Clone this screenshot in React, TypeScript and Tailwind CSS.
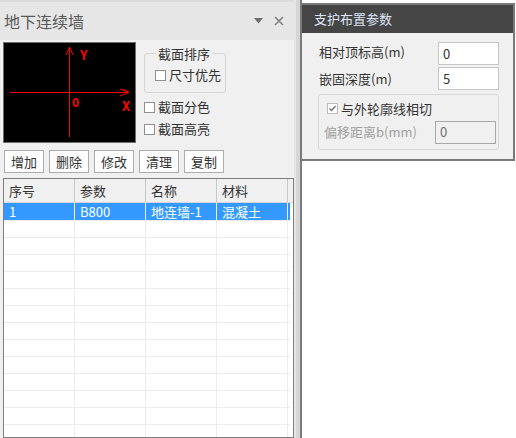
import { useState } from 'react'

const font = { fontFamily: '"Noto Sans CJK SC", "Noto Sans", sans-serif' }

const columns = ['序号', '参数', '名称', '材料']
const rows = [['1', 'B800', '地连墙-1', '混凝土']]

function CheckBox({ checked = false, disabled = false }: { checked?: boolean; disabled?: boolean }) {
  return (
    <span
      className={`flex h-[11px] w-[11px] items-center justify-center border bg-white ${
        disabled ? 'border-[#bcbcbc]' : 'border-[#8f8f8f]'
      }`}
    >
      {checked && (
        <svg width="9" height="9" viewBox="0 0 9 9">
          <path d="M1.5 4.5 L3.5 6.5 L7.5 2" fill="none" stroke="#6d6d6d" strokeWidth="1.3" />
        </svg>
      )}
    </span>
  )
}

function Preview() {
  return (
    <div className="h-[101px] w-[133px] shrink-0 border border-[#6e6e6e] bg-black">
      <svg width="131" height="99" viewBox="0 0 131 99">
        <g stroke="#ff0000" strokeWidth="1" fill="none">
          <line x1="65.5" y1="4" x2="65.5" y2="94" />
          <line x1="6" y1="49.5" x2="125" y2="49.5" />
          <path d="M62 12 L65.5 4 L69 12" />
          <path d="M116 46 L125 49.5 L116 53" />
          <path d="M119 46 L125 49.5" />
        </g>
        <text x="76" y="17" fill="#ff0000" fontSize="13" fontWeight="700" style={font}>Y</text>
        <text x="68" y="64" fill="#ff0000" fontSize="12" fontWeight="700" style={font}>0</text>
        <text x="118" y="68" fill="#ff0000" fontSize="13" fontWeight="700" style={font}>X</text>
      </svg>
    </div>
  )
}

function LeftPanel() {
  const [selected] = useState(0)
  const blank = Array.from({ length: 13 })

  return (
    <div className="flex h-[438px] w-[294px] shrink-0 flex-col bg-[#f0f0f0]">
      <div className="flex h-[40px] items-center justify-between border-t-2 border-[#dcdcdc] bg-[#e6e6e6] pl-[4px] pr-[10px]">
        <span className="text-[16px] text-[#595959]">地下连续墙</span>
        <div className="flex items-center gap-[11px] text-[#777]">
          <svg width="9" height="6" viewBox="0 0 9 6">
            <path d="M0 0 H9 L4.5 5.5 Z" fill="#707070" />
          </svg>
          <svg width="10" height="10" viewBox="0 0 10 10">
            <path d="M1 1 L9 9 M9 1 L1 9" stroke="#808080" strokeWidth="1.6" />
          </svg>
        </div>
      </div>

      <div className="flex gap-[8px] pl-[3px] pt-[2px]">
        <Preview />
        <div className="flex flex-col pt-[4px]">
          <fieldset className="h-[47px] w-[82px] rounded-[3px] border border-[#d5d5d5] pl-[10px]">
            <legend className="-mt-[3px] ml-[1px] px-[2px] text-[13px] leading-[15px] text-[#333]">截面排序</legend>
            <label className="mt-[6px] flex items-center gap-[3px] text-[13px] leading-[16px] text-[#333]">
              <CheckBox />
              尺寸优先
            </label>
          </fieldset>
          <label className="mt-[6px] flex items-center gap-[3px] text-[13px] leading-[16px] text-[#333]">
            <CheckBox />
            截面分色
          </label>
          <label className="mt-[6px] flex items-center gap-[3px] text-[13px] leading-[16px] text-[#333]">
            <CheckBox />
            截面高亮
          </label>
        </div>
      </div>

      <div className="mt-[7px] flex gap-[5px] pl-[4px]">
        {['增加', '删除', '修改', '清理', '复制'].map((b) => (
          <button
            key={b}
            className="h-[23px] w-[40px] border border-[#adadad] bg-[#fdfdfd] text-[13px] leading-none text-[#333]"
          >
            {b}
          </button>
        ))}
      </div>

      <div className="ml-[3px] mt-[5px] flex-1 overflow-hidden border border-[#7f7f7f] bg-white">
        <div className="flex h-[24px] border-b border-[#d6d6d6] bg-[#f0f0f0] text-[13px] text-[#333]">
          {columns.map((c) => (
            <div key={c} className="flex w-[71px] items-center border-r border-[#c8c8c8] pl-[5px]">
              {c}
            </div>
          ))}
        </div>
        {rows.map((r, i) => (
          <div
            key={i}
            className={`flex h-[17px] w-[286px] text-[13px] leading-[17px] ${
              i === selected ? 'bg-[#3399ff] text-white' : 'text-[#333]'
            }`}
          >
            {r.map((v, j) => (
              <div key={j} className="w-[71px] border-r border-[#f0f0f0] pl-[5px]">
                {v}
              </div>
            ))}
          </div>
        ))}
        {blank.map((_, i) => (
          <div key={i} className="flex h-[17px] w-[286px] border-t border-[#ececec]">
            {columns.map((c) => (
              <div key={c} className="w-[71px] border-r border-[#ececec]" />
            ))}
          </div>
        ))}
      </div>
    </div>
  )
}

function RightPanel() {
  return (
    <div className="mt-[3px] h-[158px] w-[213px] border-2 border-l-0 border-[#7a7a7a] bg-[#f0f0f0]">
      <div className="flex h-[28px] items-center bg-[#454545] pl-[12px] text-[13px] text-[#dce6f7]">支护布置参数</div>
      <div className="flex flex-col pl-[17px] pr-[14px] pt-[9px] text-[13px] text-[#333]">
        <div className="flex items-center justify-between">
          <span className="-mt-[4px]">相对顶标高(m)</span>
          <div className="flex h-[23px] w-[61px] items-center border border-[#c6c6c6] bg-white pl-[4px]">0</div>
        </div>
        <div className="mt-[2px] flex items-center justify-between">
          <span>嵌固深度(m)</span>
          <div className="flex h-[23px] w-[61px] items-center border border-[#c6c6c6] bg-white pl-[4px]">5</div>
        </div>
        <div className="-ml-[1px] mt-[4px] h-[56px] rounded-[3px] border border-[#d8d8d8] pl-[8px] pr-[2px] pt-[4px]">
          <label className="flex items-center gap-[3px]">
            <CheckBox checked disabled />
            <span>与外轮廓线相切</span>
          </label>
          <div className="mt-[2px] flex items-center justify-between">
            <span className="-ml-[3px] text-[#a0a0a0]">偏移距离b(mm)</span>
            <div className="flex h-[23px] w-[61px] items-center border border-[#a8a8a8] bg-[#f0f0f0] pl-[4px] text-[#6d6d6d]">
              0
            </div>
          </div>
        </div>
      </div>
    </div>
  )
}

export default function App() {
  return (
    <div className="flex h-[438px] w-[516px] overflow-hidden bg-white" style={font}>
      <LeftPanel />
      <div className="w-[8px] shrink-0 border-l-2 border-r-2 border-l-[#e6e6e6] border-r-[#7a7a7a] bg-[#d6d6d6]" />
      <RightPanel />
    </div>
  )
}
